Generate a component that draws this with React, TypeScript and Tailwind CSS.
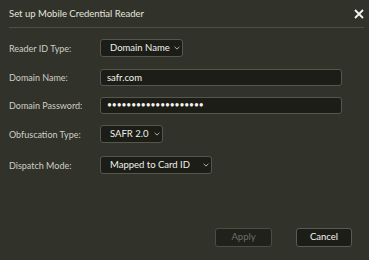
import React from 'react'

const font = { fontFamily: 'Lato, "Open Sans", sans-serif' }

function Chevron() {
  return (
    <svg width="6" height="4" viewBox="0 0 6 4" className="shrink-0">
      <path d="M0.6 0.8 L3 3.1 L5.4 0.8" fill="none" stroke="#c2c2b8" strokeWidth="0.9" />
    </svg>
  )
}

function Select({ value, width }: { value: string; width: string }) {
  return (
    <div className={`${width} h-[18px] flex items-center justify-between pl-[9px] pr-[2px] bg-[#1c1d16] border border-[#56574c] rounded-[3px]`}>
      <span className="text-[9.5px] text-[#f0f0ea] leading-none whitespace-nowrap">{value}</span>
      <Chevron />
    </div>
  )
}

function Input({ children }: { children: React.ReactNode }) {
  return (
    <div className="w-[242px] h-[17px] flex items-center px-[6px] bg-[#1c1d16] border border-[#56574c] rounded-[3px]">
      {children}
    </div>
  )
}

function Row({ label, children, className }: { label: string; children: React.ReactNode; className: string }) {
  return (
    <div className={`flex items-center ${className}`}>
      <div className="w-[91px] text-[9px] text-[#cfcfc6] leading-none whitespace-nowrap">{label}</div>
      {children}
    </div>
  )
}

export default function App() {
  return (
    <div style={font} className="w-[369px] h-[260px] bg-[#31322a] flex flex-col pl-[9px] pr-[5px]">
      <div className="h-[28px] flex items-center justify-between border-b border-[#4e4f45] pt-[2px]">
        <span className="text-[9.5px] text-[#e6e6de]">Set up Mobile Credential Reader</span>
        <svg width="10" height="10" viewBox="0 0 10 10" className="mb-[2px]">
          <path d="M1 1 L9 9 M9 1 L1 9" stroke="#f4f4f0" strokeWidth="1.8" />
        </svg>
      </div>

      <Row label="Reader ID Type:" className="mt-[11px]">
        <Select value="Domain Name" width="w-[83px]" />
      </Row>
      <Row label="Domain Name:" className="mt-[12px]">
        <Input>
          <span className="text-[9.5px] text-[#f4f4ef] leading-none">safr.com</span>
        </Input>
      </Row>
      <Row label="Domain Password:" className="mt-[11px]">
        <Input>
          <span className="text-[8.5px] text-[#f4f4ef] leading-none tracking-[-0.1px]">••••••••••••••••••••</span>
        </Input>
      </Row>
      <Row label="Obfuscation Type:" className="mt-[11px]">
        <Select value="SAFR 2.0" width="w-[63px]" />
      </Row>
      <Row label="Dispatch Mode:" className="mt-[13px]">
        <Select value="Mapped to Card ID" width="w-[112px]" />
      </Row>

      <div className="mt-auto mb-[13px] flex justify-end gap-[24px] pr-[12px]">
        <button className="w-[57px] h-[19px] rounded-[3px] border border-[#4c4d43] bg-[#20211a] text-[9.5px] text-[#6e6f66]">
          Apply
        </button>
        <button className="w-[56px] h-[19px] rounded-[3px] border border-[#5a5b50] bg-[#1c1d16] text-[9.5px] text-[#f4f4ef]">
          Cancel
        </button>
      </div>
    </div>
  )
}
